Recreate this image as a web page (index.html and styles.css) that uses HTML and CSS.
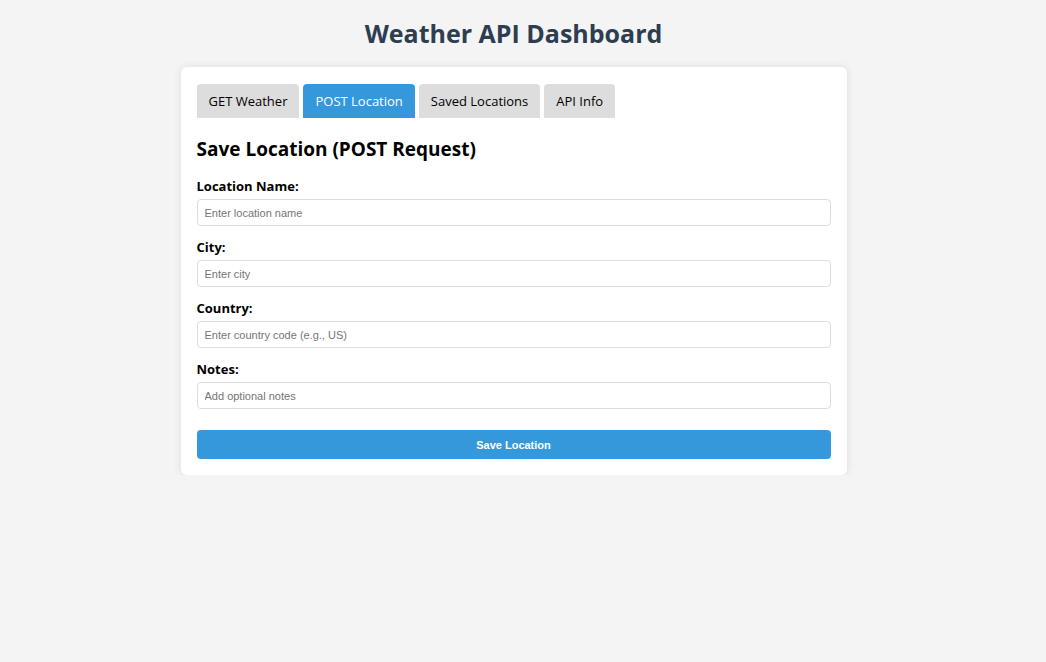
FILE: index.html
```html
<!DOCTYPE html>
<html>
<head>
<meta charset="utf-8">
<title>Weather API Dashboard</title>
<link rel="stylesheet" href="styles.css">
</head>
<body>
<h1 class="title">Weather API Dashboard</h1>
<div class="card">
  <div class="tabs">
    <button class="tab">GET Weather</button>
    <button class="tab active">POST Location</button>
    <button class="tab">Saved Locations</button>
    <button class="tab">API Info</button>
  </div>
  <h2 class="section-title">Save Location (POST Request)</h2>
  <form class="form">
    <div class="group">
      <label class="label">Location Name:</label>
      <input class="input" type="text" placeholder="Enter location name">
    </div>
    <div class="group">
      <label class="label">City:</label>
      <input class="input" type="text" placeholder="Enter city">
    </div>
    <div class="group">
      <label class="label">Country:</label>
      <input class="input" type="text" placeholder="Enter country code (e.g., US)">
    </div>
    <div class="group">
      <label class="label">Notes:</label>
      <input class="input" type="text" placeholder="Add optional notes">
    </div>
    <button class="submit" type="button">Save Location</button>
  </form>
</div>
</body>
</html>
```
FILE: styles.css
```css
html, body {
  margin: 0;
  padding: 0;
}
body {
  background: #f4f4f4;
  font-family: "Open Sans", "Noto Sans", sans-serif;
  color: #000;
  padding: 1px 19px 0 0;
}
.title {
  text-align: center;
  color: #2c3e50;
  font-size: 25px;
  font-weight: 700;
  line-height: 34px;
  margin: 15px 0 17px;
}
.card {
  width: 666px;
  box-sizing: border-box;
  margin: 0 auto;
  background: #fff;
  border-radius: 6px;
  box-shadow: 0 0 8px rgba(0, 0, 0, 0.1);
  padding: 17px 16px 16px;
}
.tabs {
  display: flex;
  gap: 4px;
}
.tab {
  font-family: inherit;
  font-size: 13px;
  line-height: 18px;
  padding: 8px 12px;
  border: none;
  border-radius: 4px 4px 0 0;
  background: #ddd;
  color: #000;
}
.tab.active {
  background: #3498db;
  color: #fff;
}
.section-title {
  font-size: 19px;
  font-weight: 700;
  line-height: 26px;
  margin: 18px 0 15px;
}
.form {
  display: flex;
  flex-direction: column;
}
.group {
  display: flex;
  flex-direction: column;
  gap: 4px;
  margin-bottom: 12px;
}
.label {
  font-size: 13px;
  font-weight: 700;
  line-height: 18px;
}
.input {
  height: 27px;
  box-sizing: border-box;
  border: 1px solid #ddd;
  border-radius: 4px;
  padding: 0 7px;
  font-family: "Liberation Sans", Arial, sans-serif;
  font-size: 11px;
}
.input::placeholder {
  color: #757575;
}
.submit {
  margin-top: 9px;
  height: 29px;
  border: none;
  border-radius: 4px;
  background: #3498db;
  color: #fff;
  font-family: "Liberation Sans", Arial, sans-serif;
  font-size: 11px;
  font-weight: 700;
}
```
